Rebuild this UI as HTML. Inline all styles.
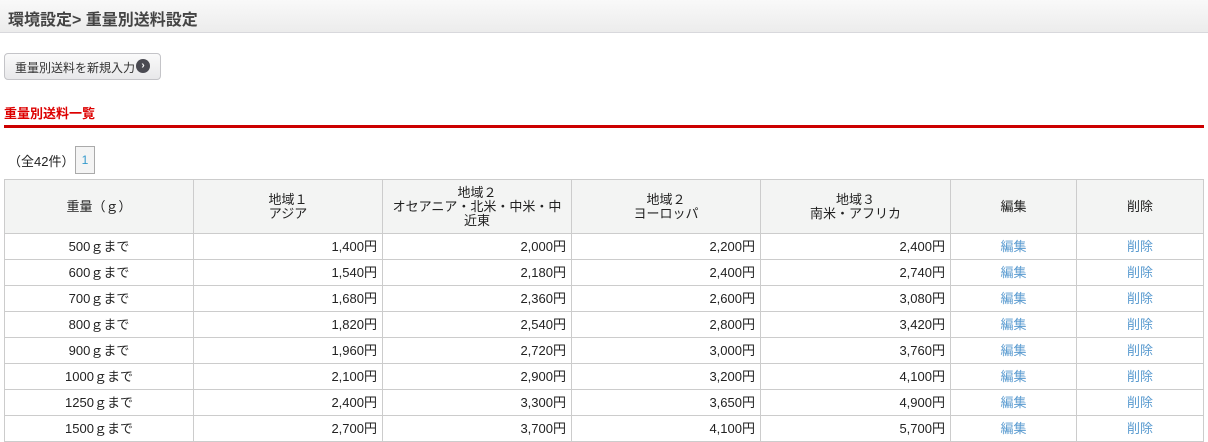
<!DOCTYPE html>
<html><head><meta charset="utf-8"><style>
body{margin:0;background:#fff;font-family:"Liberation Sans","Noto Sans CJK JP",sans-serif;color:#222;width:1208px;height:431px;overflow:hidden;position:relative}
.hd{position:absolute;left:0;top:0;width:1208px;height:32px;background:linear-gradient(#f9f9f9,#ececec);border-bottom:1px solid #d8d8dc}
.hd span{position:absolute;left:8px;top:6px;font-size:16px;font-weight:bold;color:#444}
.btn{position:absolute;left:4px;top:53px;width:155px;height:25px;border:1px solid #c4c4c8;border-radius:4px;background:linear-gradient(#fafafa,#e8e8ea);font-size:12px;color:#333}
.btn span{position:absolute;left:10px;top:5px}
.btn i{position:absolute;left:131px;top:5px;width:14px;height:14px;border-radius:50%;background:#4a4a52;color:#fff;font-style:normal;font-size:10px;line-height:14px;text-align:center;font-weight:bold}
.ttl{position:absolute;left:4px;top:103px;font-size:13px;font-weight:bold;color:#d00}
.line{position:absolute;left:4px;top:125px;width:1200px;height:3px;background:#c00}
.cnt{position:absolute;left:8px;top:151px;font-size:13px}
.pg{position:absolute;left:75px;top:146px;width:18px;height:26px;border:1px solid #aaa;background:#f4f4f4;color:#39c;font-size:12px;text-align:center;line-height:26px}
table{position:absolute;left:4px;top:179px;border-collapse:collapse;font-size:13px;table-layout:fixed}
td,th{border:1px solid #ccc;height:25px;padding:0 5px;line-height:14px}
th{background:#f3f4f3;font-weight:normal;height:53px}
td{text-align:right}
td.c{text-align:center}
td.l{text-align:center;color:#5a9bd0}
</style></head><body>
<div class="hd"><span>環境設定&gt; 重量別送料設定</span></div>
<div class="btn"><span>重量別送料を新規入力</span><i>›</i></div>
<div class="ttl">重量別送料一覧</div>
<div class="line"></div>
<div class="cnt">（全42件）</div>
<div class="pg">1</div>
<table>
<colgroup><col style="width:189px"><col style="width:189px"><col style="width:189px"><col style="width:189px"><col style="width:190px"><col style="width:126px"><col style="width:127px"></colgroup>
<tr><th>重量（ｇ）</th><th>地域１<br>アジア</th><th>地域２<br>オセアニア・北米・中米・中近東</th><th>地域２<br>ヨーロッパ</th><th>地域３<br>南米・アフリカ</th><th>編集</th><th>削除</th></tr>
<tr><td class="c">500ｇまで</td><td>1,400円</td><td>2,000円</td><td>2,200円</td><td>2,400円</td><td class="l">編集</td><td class="l">削除</td></tr>
<tr><td class="c">600ｇまで</td><td>1,540円</td><td>2,180円</td><td>2,400円</td><td>2,740円</td><td class="l">編集</td><td class="l">削除</td></tr>
<tr><td class="c">700ｇまで</td><td>1,680円</td><td>2,360円</td><td>2,600円</td><td>3,080円</td><td class="l">編集</td><td class="l">削除</td></tr>
<tr><td class="c">800ｇまで</td><td>1,820円</td><td>2,540円</td><td>2,800円</td><td>3,420円</td><td class="l">編集</td><td class="l">削除</td></tr>
<tr><td class="c">900ｇまで</td><td>1,960円</td><td>2,720円</td><td>3,000円</td><td>3,760円</td><td class="l">編集</td><td class="l">削除</td></tr>
<tr><td class="c">1000ｇまで</td><td>2,100円</td><td>2,900円</td><td>3,200円</td><td>4,100円</td><td class="l">編集</td><td class="l">削除</td></tr>
<tr><td class="c">1250ｇまで</td><td>2,400円</td><td>3,300円</td><td>3,650円</td><td>4,900円</td><td class="l">編集</td><td class="l">削除</td></tr>
<tr><td class="c">1500ｇまで</td><td>2,700円</td><td>3,700円</td><td>4,100円</td><td>5,700円</td><td class="l">編集</td><td class="l">削除</td></tr>
</table>
</body></html>
